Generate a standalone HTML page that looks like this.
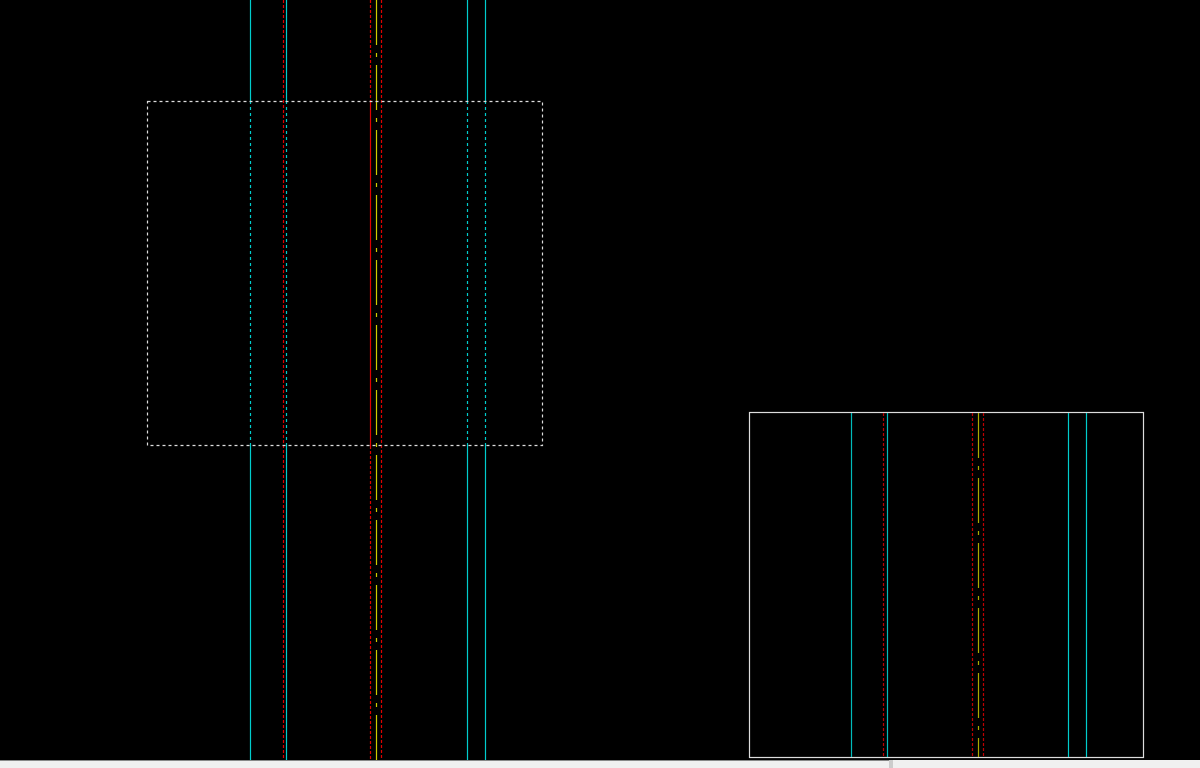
<!DOCTYPE html><html><head><style>body{margin:0;background:#000;width:1200px;height:768px;overflow:hidden}</style></head><body>
<svg width="1200" height="768" style="position:absolute;left:0;top:0">
<rect width="1200" height="768" fill="#000"/>
<g stroke-width="1.2">
<!-- main view: outside box -->
<line x1="250.5" y1="0" x2="250.5" y2="101" stroke="#0cc"/><line x1="250.5" y1="446" x2="250.5" y2="760" stroke="#0cc"/>
<line x1="250.5" y1="101" x2="250.5" y2="446" stroke="#0cc" stroke-dasharray="3,3"/>
<line x1="286.5" y1="0" x2="286.5" y2="101" stroke="#0cc"/><line x1="286.5" y1="446" x2="286.5" y2="760" stroke="#0cc"/>
<line x1="286.5" y1="101" x2="286.5" y2="446" stroke="#0cc" stroke-dasharray="3,3"/>
<line x1="467.5" y1="0" x2="467.5" y2="101" stroke="#0cc"/><line x1="467.5" y1="446" x2="467.5" y2="760" stroke="#0cc"/>
<line x1="467.5" y1="101" x2="467.5" y2="446" stroke="#0cc" stroke-dasharray="3,3"/>
<line x1="485.5" y1="0" x2="485.5" y2="101" stroke="#0cc"/><line x1="485.5" y1="446" x2="485.5" y2="760" stroke="#0cc"/>
<line x1="485.5" y1="101" x2="485.5" y2="446" stroke="#0cc" stroke-dasharray="3,3"/>
<line x1="283.5" y1="0" x2="283.5" y2="760" stroke="#d00" stroke-dasharray="3,2"/>
<line x1="370.5" y1="0" x2="370.5" y2="101" stroke="#d00" stroke-dasharray="3,2"/>
<line x1="370.5" y1="101" x2="370.5" y2="446" stroke="#d00"/>
<line x1="370.5" y1="446" x2="370.5" y2="760" stroke="#d00" stroke-dasharray="3,2"/>
<line x1="381.5" y1="0" x2="381.5" y2="760" stroke="#d00" stroke-dasharray="3,2"/>
<line x1="376.5" y1="0" x2="376.5" y2="760" stroke="#cc0" stroke-dasharray="45,8,4,8"/>
<rect x="147.5" y="101.5" width="395" height="344" fill="none" stroke="#ddd" stroke-dasharray="3,3"/>
<!-- mini view -->
<rect x="749.5" y="412.5" width="394" height="345" fill="#000" stroke="#ddd"/>
<line x1="851.5" y1="413" x2="851.5" y2="757" stroke="#0bb"/>
<line x1="887.5" y1="413" x2="887.5" y2="757" stroke="#0bb"/>
<line x1="1068.5" y1="413" x2="1068.5" y2="757" stroke="#0cc"/>
<line x1="1086.5" y1="413" x2="1086.5" y2="757" stroke="#0cc"/>
<line x1="883.5" y1="413" x2="883.5" y2="757" stroke="#b00" stroke-dasharray="3,2"/>
<line x1="972.5" y1="413" x2="972.5" y2="757" stroke="#b00" stroke-dasharray="3,2"/>
<line x1="983.5" y1="413" x2="983.5" y2="757" stroke="#b00" stroke-dasharray="3,2"/>
<line x1="978.5" y1="413" x2="978.5" y2="757" stroke="#aa0" stroke-dasharray="45,8,4,8"/>
</g>
<rect x="0" y="760" width="1200" height="8" fill="#f0f0f0"/>
<rect x="0" y="760" width="889" height="1" fill="#888"/>
<rect x="889" y="760" width="4" height="8" fill="#ccc"/>
</svg>
</body></html>
